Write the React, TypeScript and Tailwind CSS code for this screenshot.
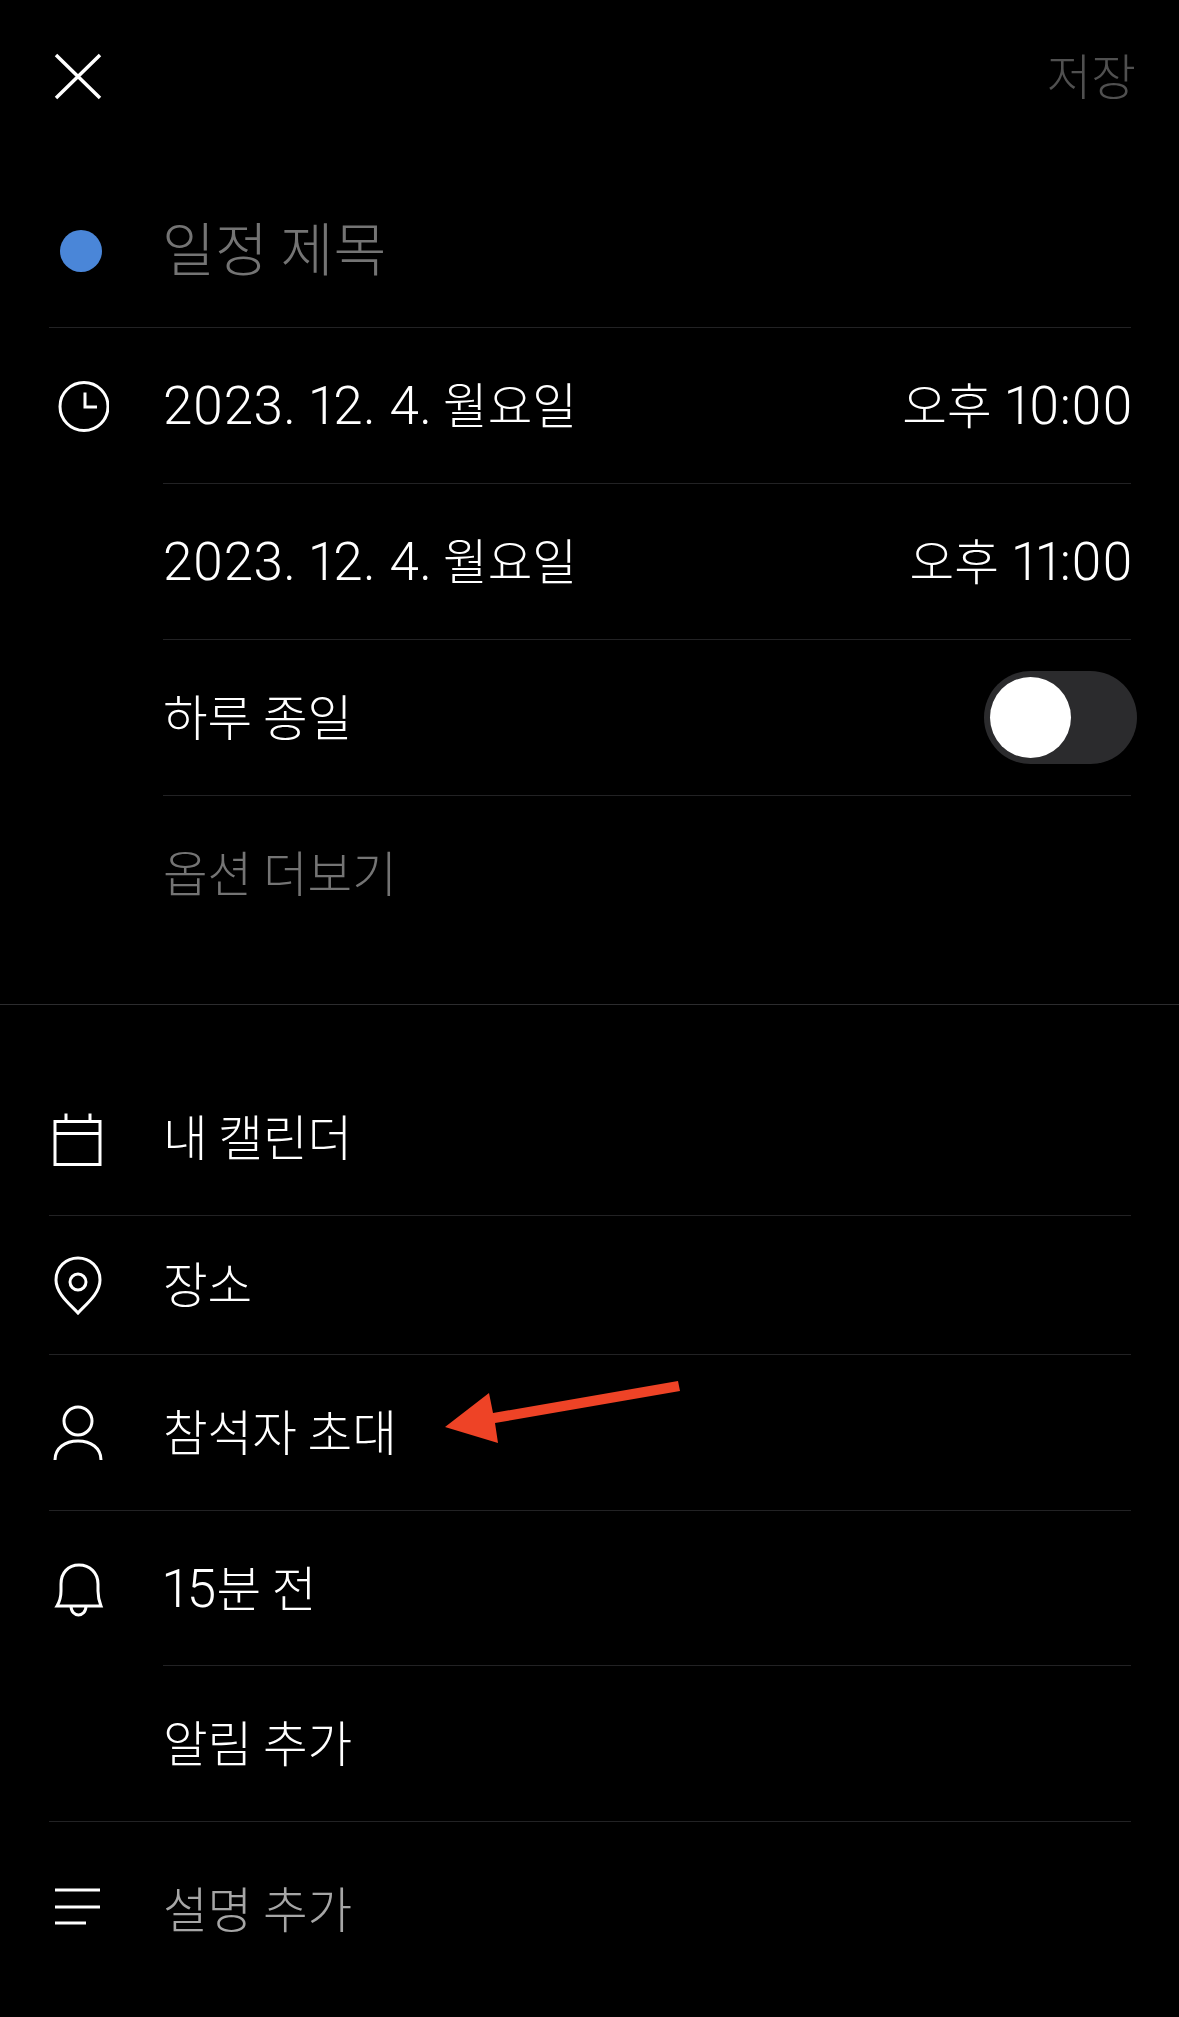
import React from 'react';

function Icon({ children }: { children: React.ReactNode }) {
  return (
    <svg width="60" height="64" viewBox="0 0 60 64" fill="none" stroke="#ffffff" strokeWidth="3" className="block shrink-0">
      {children}
    </svg>
  );
}

function Row({
  icon,
  height,
  inset,
  noBorder,
  children,
}: {
  icon?: React.ReactNode;
  height: string;
  inset?: boolean;
  noBorder?: boolean;
  children: React.ReactNode;
}) {
  const line = noBorder ? '' : 'border-b border-[#222224]';
  return (
    <div className={`flex ${height} ${inset ? '' : line}`}>
      <div className="flex w-[114px] shrink-0 items-center">{icon}</div>
      <div className={`flex min-w-0 flex-1 items-center justify-between ${inset ? line : ''}`}>{children}</div>
    </div>
  );
}

// digits sit a little larger than the hangul next to them
function Num({ children }: { children: React.ReactNode }) {
  return <span className="font-['Roboto',sans-serif] text-[53px] font-[350] tracking-[0.4px] proportional-nums">{children}</span>;
}

function Label({ className, children }: { className?: string; children: React.ReactNode }) {
  return <span className={`pb-[5px] ${className ?? ''}`}>{children}</span>;
}

export default function App() {
  return (
    <div className="relative h-[2017px] w-[1179px] overflow-hidden bg-black font-['Noto_Sans_CJK_KR',sans-serif] text-[48.5px] font-light text-white">
      <div className="pl-[49px] pr-[48px]">
        <header className="flex h-[153px] items-center justify-between">
          <Icon>
            <path d="M7 10L51 53M51 10L7 53" strokeWidth="3.5" />
          </Icon>
          <span className="-mr-[5px] pb-[5px] text-[#505050]">저장</span>
        </header>

        <Row
          height="h-[175px] pt-[21px]"
          icon={<div className="ml-[11px] h-[42px] w-[42px] rounded-full bg-[#4a86d8]" />}
        >
          <span className="-ml-[1px] pb-[8px] text-[57.5px] text-[#747474]">일정 제목</span>
        </Row>

        <Row
          height="h-[156px]"
          inset
          icon={
            <Icon>
              <circle cx="35" cy="32.5" r="24" />
              <path d="M36 18.5V33H48" />
            </Icon>
          }
        >
          <span className="pt-[3px]"><Num>2023. 12. 4.</Num> 월요일</span>
          <span className="-mr-[2px] pt-[3px] [word-spacing:3px]">오후 <Num>10:00</Num></span>
        </Row>
        <Row height="h-[156px]" inset>
          <span className="pt-[3px]"><Num>2023. 12. 4.</Num> 월요일</span>
          <span className="-mr-[2px] pt-[3px] [word-spacing:3px]">오후 <Num>11:00</Num></span>
        </Row>
        <Row height="h-[156px]" inset>
          <Label>하루 종일</Label>
          <div className="-mr-[6px] flex h-[93px] w-[153px] items-center rounded-full bg-[#2b2b2d] pl-[6px]">
            <div className="h-[81px] w-[81px] rounded-full bg-white" />
          </div>
        </Row>
        <Row height="h-[156px]" noBorder>
          <Label className="text-[#747474]">옵션 더보기</Label>
        </Row>
      </div>

      <div className="mt-[52px] border-t border-[#2c2c2e]" />

      <div className="mt-[55px] pl-[49px] pr-[48px]">
        <Row
          height="h-[156px]"
          icon={
            <Icon>
              <path d="M6 15.5H51V58.5H6ZM6 27.5H51M17 7.5V15.5M41 7.5V15.5" />
            </Icon>
          }
        >
          <Label>내 캘린더</Label>
        </Row>
        <Row
          height="h-[139px]"
          icon={
            <Icon>
              <path d="M29 60C22 52 7 41 7 27C7 14 17 5 29 5C41 5 51 14 51 27C51 41 36 52 29 60Z" />
              <circle cx="29" cy="29" r="8" />
            </Icon>
          }
        >
          <Label>장소</Label>
        </Row>
        <Row
          height="h-[156px]"
          icon={
            <Icon>
              <circle cx="29" cy="20" r="14" />
              <path d="M6 59C6 47 16 40 29 40C42 40 52 47 52 59" />
            </Icon>
          }
        >
          <Label>참석자 초대</Label>
        </Row>
        <Row
          height="h-[155px]"
          inset
          icon={
            <Icon>
              <path d="M8 49C11 44 12 40 12 34V27C12 16 19 8 30 8C41 8 49 16 49 27V34C49 40 50 44 52 49Z" />
              <path d="M22 49C22 55 26 58 29.5 58C33 58 37 55 37 49" />
            </Icon>
          }
        >
          <span className="pt-[4px]"><Num>15</Num>분 전</span>
        </Row>
        <Row height="h-[156px]">
          <Label>알림 추가</Label>
        </Row>
        <Row
          height="h-[176px]"
          noBorder
          icon={
            <Icon>
              <path d="M6 12H51M6 29H51M6 45H37" />
            </Icon>
          }
        >
          <Label className="text-[#a6a6a6]">설명 추가</Label>
        </Row>
      </div>

      {/* annotation arrow drawn over the screenshot */}
      <svg className="absolute left-0 top-0" width="1179" height="2017" viewBox="0 0 1179 2017" fill="#ee4326">
        <path d="M445 1427L489 1393L493 1413L678 1381L680 1391L495 1423L498 1443Z" />
      </svg>
    </div>
  );
}
